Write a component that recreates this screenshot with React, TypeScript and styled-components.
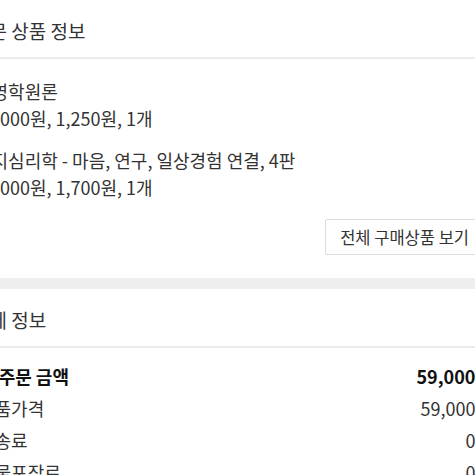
import React from "react";
import styled, { createGlobalStyle } from "styled-components";
import { ChevronRight } from "lucide-react";

const GlobalStyle = createGlobalStyle`
  html, body {
    margin: 0;
    padding: 0;
    background: #ffffff;
    overflow: hidden;
  }
  body {
    font-family: "Noto Sans CJK KR", "Noto Sans", sans-serif;
    color: #333333;
  }
`;

const Viewport = styled.div`
  width: 475px;
  height: 475px;
  overflow: hidden;
`;

const Page = styled.div`
  margin-left: -42px;
  width: 554px;
`;

const SectionHeader = styled.div`
  height: 59px;
  padding: 4px 20px 0 14px;
  box-sizing: border-box;
  display: flex;
  align-items: center;
  font-size: 19px;
  color: #333333;
  border-bottom: 2px solid #ebebeb;
`;

const ItemList = styled.div`
  display: flex;
  flex-direction: column;
  gap: 15px;
  padding: 19px 20px 0 17px;
`;

const Item = styled.div`
  display: flex;
  flex-direction: column;
`;

const ItemLine = styled.div`
  font-size: 18px;
  line-height: 27px;
  color: #333333;
  white-space: nowrap;
`;

const ButtonRow = styled.div`
  display: flex;
  justify-content: flex-end;
  padding: 18px 12px 23px 20px;
`;

const OutlineButton = styled.button`
  height: 36px;
  padding: 0 12px 0 14px;
  display: flex;
  align-items: center;
  gap: 4px;
  background: #ffffff;
  border: 1px solid #dddddd;
  border-radius: 2px;
  font-family: inherit;
  font-size: 16.5px;
  color: #333333;
`;

const Band = styled.div`
  height: 11px;
  background: #eeeeee;
`;

const SummaryList = styled.div`
  padding: 12px 20px 0;
`;

const SummaryRow = styled.div<{ $strong?: boolean }>`
  display: flex;
  justify-content: space-between;
  align-items: center;
  height: 32px;
  font-size: 18px;
  font-weight: ${(p) => (p.$strong ? 700 : 400)};
  color: ${(p) => (p.$strong ? "#111111" : "#333333")};
`;

const items = [
  { title: "경영학원론", detail: "25,000원, 1,250원, 1개" },
  { title: "인지심리학 - 마음, 연구, 일상경험 연결, 4판", detail: "34,000원, 1,700원, 1개" },
];

const summary = [
  { label: "총 주문 금액", value: "59,000원", strong: true },
  { label: "상품가격", value: "59,000원" },
  { label: "배송료", value: "0원" },
  { label: "선물포장료", value: "0원" },
];

export default function App() {
  return (
    <Viewport>
      <GlobalStyle />
      <Page>
        <SectionHeader>주문 상품 정보</SectionHeader>
        <ItemList>
          {items.map((it) => (
            <Item key={it.title}>
              <ItemLine>{it.title}</ItemLine>
              <ItemLine>{it.detail}</ItemLine>
            </Item>
          ))}
        </ItemList>
        <ButtonRow>
          <OutlineButton>
            전체 구매상품 보기
            <ChevronRight size={14} strokeWidth={1.5} />
          </OutlineButton>
        </ButtonRow>
        <Band />
        <SectionHeader>결제 정보</SectionHeader>
        <SummaryList>
          {summary.map((row) => (
            <SummaryRow key={row.label} $strong={row.strong}>
              <span>{row.label}</span>
              <span>{row.value}</span>
            </SummaryRow>
          ))}
        </SummaryList>
      </Page>
    </Viewport>
  );
}
